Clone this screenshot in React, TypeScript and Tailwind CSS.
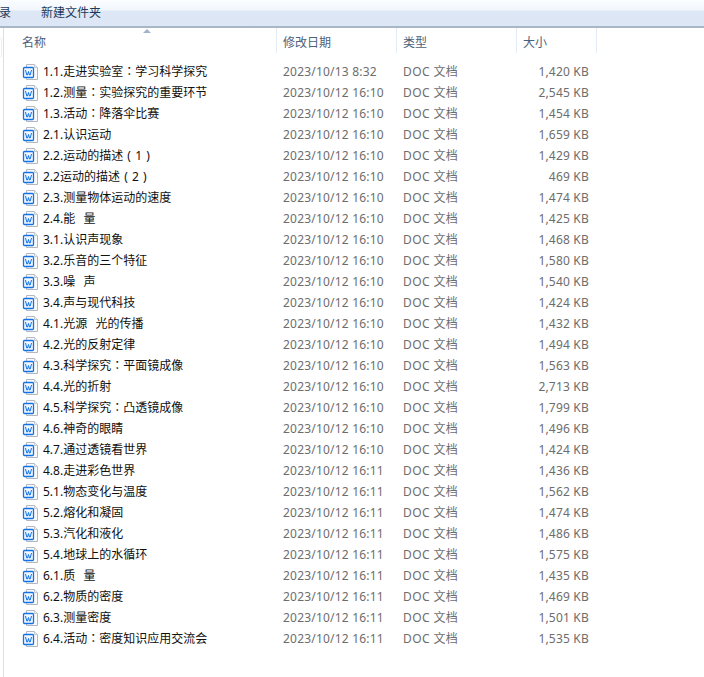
const rows: [string, string, string][] = [
  ["1.1.走进实验室：学习科学探究", "2023/10/13 8:32", "1,420 KB"],
  ["1.2.测量：实验探究的重要环节", "2023/10/12 16:10", "2,545 KB"],
  ["1.3.活动：降落伞比赛", "2023/10/12 16:10", "1,454 KB"],
  ["2.1.认识运动", "2023/10/12 16:10", "1,659 KB"],
  ["2.2.运动的描述（1）", "2023/10/12 16:10", "1,429 KB"],
  ["2.2运动的描述（2）", "2023/10/12 16:10", "469 KB"],
  ["2.3.测量物体运动的速度", "2023/10/12 16:10", "1,474 KB"],
  ["2.4.能  量", "2023/10/12 16:10", "1,425 KB"],
  ["3.1.认识声现象", "2023/10/12 16:10", "1,468 KB"],
  ["3.2.乐音的三个特征", "2023/10/12 16:10", "1,580 KB"],
  ["3.3.噪  声", "2023/10/12 16:10", "1,540 KB"],
  ["3.4.声与现代科技", "2023/10/12 16:10", "1,424 KB"],
  ["4.1.光源  光的传播", "2023/10/12 16:10", "1,432 KB"],
  ["4.2.光的反射定律", "2023/10/12 16:10", "1,494 KB"],
  ["4.3.科学探究：平面镜成像", "2023/10/12 16:10", "1,563 KB"],
  ["4.4.光的折射", "2023/10/12 16:10", "2,713 KB"],
  ["4.5.科学探究：凸透镜成像", "2023/10/12 16:10", "1,799 KB"],
  ["4.6.神奇的眼睛", "2023/10/12 16:10", "1,496 KB"],
  ["4.7.通过透镜看世界", "2023/10/12 16:10", "1,424 KB"],
  ["4.8.走进彩色世界", "2023/10/12 16:11", "1,436 KB"],
  ["5.1.物态变化与温度", "2023/10/12 16:11", "1,562 KB"],
  ["5.2.熔化和凝固", "2023/10/12 16:11", "1,474 KB"],
  ["5.3.汽化和液化", "2023/10/12 16:11", "1,486 KB"],
  ["5.4.地球上的水循环", "2023/10/12 16:11", "1,575 KB"],
  ["6.1.质  量", "2023/10/12 16:11", "1,435 KB"],
  ["6.2.物质的密度", "2023/10/12 16:11", "1,469 KB"],
  ["6.3.测量密度", "2023/10/12 16:11", "1,501 KB"],
  ["6.4.活动：密度知识应用交流会", "2023/10/12 16:11", "1,535 KB"],
];

function DocIcon() {
  return (
    <svg width="16" height="16" viewBox="0 0 16 16" className="shrink-0">
      <path d="M4.5 0.5H12.5L15.5 3.5V15.5H4.5Z" fill="#fbfbfb" stroke="#b4b8be" />
      <path d="M12.5 0.5V3.5H15.5" fill="#eef0f3" stroke="#c4c8cd" />
      <rect x="1.5" y="3.5" width="10" height="10" rx="1" fill="#f2f7ff" stroke="#1273e6" strokeWidth="1.3" />
      <path d="M3.5 6L4.8 11H5.5L6.5 7.5L7.5 11H8.2L9.5 6" fill="none" stroke="#1273e6" strokeWidth="1" />
    </svg>
  );
}

function Name({ text }: { text: string }) {
  const parts = text.split(/([：（）])/);
  return (
    <span className="ml-[5px] text-[#101010] whitespace-pre [word-spacing:1px]">
      {parts.map((p, i) =>
        p === "：" ? (
          <span key={i} className="font-['Noto_Sans_CJK_TC']">{p}</span>
        ) : p === "（" || p === "）" ? (
          <span key={i} className="inline-block w-[12px] text-center">{p === "（" ? "(" : ")"}</span>
        ) : (
          p
        ),
      )}
    </span>
  );
}

function Head({ w, label }: { w: string; label: string }) {
  return (
    <div className={`${w} h-full pl-[6px] flex items-center border-r border-[#e3ebf6] text-[#4c607a]`}>
      <span className="translate-y-[2px]">{label}</span>
    </div>
  );
}

export default function App() {
  return (
    <div
      className="w-[704px] h-[677px] overflow-hidden bg-white text-[12px] flex flex-col"
      style={{ fontFamily: '"Noto Sans", "Noto Sans CJK SC", sans-serif' }}
    >
      <div className="h-[28px] shrink-0 border-b-2 border-[#a9b6c6] bg-[linear-gradient(to_bottom,#fbfdff_0,#f2f6fc_10px,#dde7f5_11px,#dce6f4_100%)] flex items-center text-[#1e395b] leading-none">
        <span className="w-[42px] -ml-[1px] shrink-0">录</span>
        <span>新建文件夹</span>
      </div>
      <div className="flex-1 flex min-h-0">
        <div className="w-[4px] shrink-0 border-r border-[#d5dfee] pt-[9px]">
          <div className="h-[20px] w-[2px] border-r border-y border-[#eceff3] rounded-r-[2px]" />
        </div>
        <div className="flex-1 min-w-0 flex flex-col">
          <div className="relative h-[25px] flex shrink-0">
            <div className="w-[273px] h-full pl-[18px] flex items-center border-r border-[#e3ebf6] text-[#4c607a]">
              <span className="translate-y-[2px]">名称</span>
            </div>
            <Head w="w-[120px]" label="修改日期" />
            <Head w="w-[120px]" label="类型" />
            <Head w="w-[80px]" label="大小" />
            <svg width="8" height="4" viewBox="0 0 8 4" className="absolute left-[139px] top-[1px]">
              <path d="M0 4L4 0L8 4Z" fill="#9fb4cc" />
            </svg>
          </div>
          <div className="pt-[8px]">
            {rows.map(([name, date, size]) => (
              <div key={name} className="h-[21px] flex items-center">
                <div className="w-[273px] pl-[18px] flex items-center shrink-0">
                  <DocIcon />
                  <Name text={name} />
                </div>
                <div className="w-[120px] pl-[6px] tracking-[0.2px] text-[#6d6d6d] whitespace-pre shrink-0">{date}</div>
                <div className="w-[120px] pl-[6px] tracking-[0.4px] text-[#6d6d6d] whitespace-pre shrink-0">DOC 文档</div>
                <div className="w-[72px] text-right tracking-[0.2px] text-[#6d6d6d] whitespace-pre shrink-0">{size}</div>
              </div>
            ))}
          </div>
        </div>
      </div>
    </div>
  );
}
